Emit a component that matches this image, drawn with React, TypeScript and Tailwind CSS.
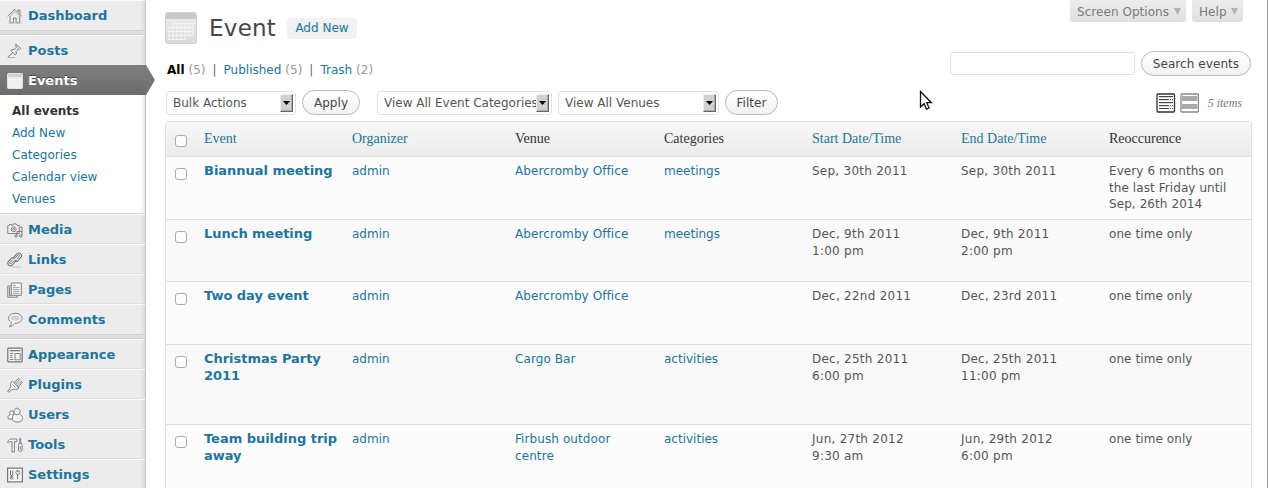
import React from "react";

type IconName =
  | "home" | "pin" | "calendar" | "media" | "link" | "pages"
  | "comment" | "appearance" | "plug" | "users" | "tools" | "settings";

const drawings: Record<IconName, React.ReactNode> = {
  home: (
    <>
      <path d="M.7 8.300 7.700 1.300l7 7M3 8v6.800h3.500V10h2.600v4.800h3.600V8M11 4.300V2h2v4.300" />
      <path d="M2.300 9 7.800 3.600 13.300 9" stroke="#aaa" />
      <path d="M1.500 15h13" stroke="#bbb" />
    </>
  ),
  pin: (
    <>
      <path d="M8.800 1 13.700 5.400l-1.200 1-1-.3-2.400 2.400.3 2.500-1.200.9-4.300-4.200 1-1.200 2.300.1 2.200-2.500-.6-1.600zM5.700 9.900.8 14" />
      <path d="M9.800 4.200l1.600 1.600" stroke="#999" />
      <path d="M.8 14.500h7.500" stroke="#aaa" />
    </>
  ),
  calendar: (
    <>
      <rect x="0.5" y="0.5" width="15" height="15" rx="1" fill="#ececec" stroke="#e4e4e4" />
      <path d="M1 2.500h14" stroke="#d2d2d2" strokeWidth="3" />
      <path d="M2 6.500h12v7.500H2zM2 9h12M2 11.500h12M5 6.500V14M8 6.500V14M11 6.500V14" stroke="#f8f8f8" strokeWidth="0.7" />
    </>
  ),
  media: (
    <>
      <path d="M.8 3.5h1.7v-1h2v1h1l1-1.600h2.800l1 1.600h1.900v8H.8z" fill="#f4f4f4" />
      <circle cx="6.7" cy="7.3" r="2.5" />
      <circle cx="6.7" cy="7.3" r="1" />
      <path d="M13 5h2v8.600M10 13.700V9.500h4.800" />
      <circle cx="9" cy="14" r="1.2" fill="#ddd" />
      <circle cx="13.8" cy="14" r="1.2" fill="#ddd" />
    </>
  ),
  link: (
    <>
      <path d="M6.400 5.900 9.800 1.800q1.800-1.500 3.500-.2 2.300 1.700.7 3.800l-3.300 3.500q-1.700 1.200-3.400-.2M9.300 8 5.900 12.500q-1.800 2.300-4.100.7-2-1.900-.1-4l2.500-2.700q1.800-1.300 3.400.2" strokeWidth="1.1" />
      <path d="m8 6 3-3.100q1.300-.4 1.800.9l-3 3.300M7 8.700l-3.100 3.200q-1.200.3-1.400-1.100l3-3" />
      <path d="M5 15h9" stroke="#bbb" />
    </>
  ),
  pages: (
    <>
      <path d="M4 4H.8v11.200h9.400v-1.600M2.500 5v8.700H4" />
      <path d="M4.300 1h10v12.300h-10z" fill="#f7f7f7" />
      <path d="M6 3.400h3M6 5.400h6.500M6 7.400h6.500M6 9.400h6.500M6 11.400h6.500" stroke="#999" />
    </>
  ),
  comment: (
    <>
      <path d="M8.400 1.300c-4 0-6.800 2.100-6.800 4.900 0 2.200 1.500 3.600 3 4.200-.2 1.800-1 3.100-2.500 4.300 3-.6 5-1.800 6-3.400 4.200-.1 6.900-2.100 6.900-5 0-2.800-2.700-5-6.600-5z" fill="#f4f4f4" />
      <ellipse cx="8.400" cy="6" rx="4.500" ry="2.700" fill="#d2d2d2" stroke="none" />
    </>
  ),
  appearance: (
    <>
      <rect x="0.8" y="1.2" width="14.4" height="13.6" rx="0.8" fill="#f4f4f4" strokeWidth="1.2" />
      <path d="M2.700 3.700h10.600" strokeWidth="1.2" />
      <path d="M2.800 6.400h3.600M2.800 8.400h2.900M2.800 10.400h2.900M2.800 12.500h3.600M8 6.500h5.200v6.300H8z" />
    </>
  ),
  plug: (
    <>
      <path d="M5.400 4.100 12 11c-1.400 1.300-3.200 1.800-5.300 1.200l-2 .6-3 2.500-1-1 2.300-3 .6-2C3 7 3.600 5.300 5.400 4.100z" fill="#f4f4f4" />
      <path d="m7.300 5.900 3.800-4.400q1.400-.3 1.300 1L8.700 7.300M10 8.800l3.800-4.200q1.400-.3 1.300 1l-3.900 4.600M5.500 7.500l3 3" />
    </>
  ),
  users: (
    <>
      <circle cx="4.8" cy="6" r="2.2" fill="#f4f4f4" />
      <path d="M3 7.700C.8 8.700.6 10.300 1.400 12h4.300l2-3.400" fill="#f4f4f4" />
      <path d="M7.500 7C6.400 5.100 6.800 1.500 10 1.200c3.200.3 3.600 3.900 2.300 5.800 2.900 1.200 4 3.900 3 6-2.300 2.700-7 2.600-9.600.3C5.100 10.900 5.500 8 7.500 7z" fill="#f4f4f4" />
      <path d="M7.500 7q2.400 1.600 4.800 0" />
    </>
  ),
  tools: (
    <>
      <path d="M.8 4.600C1.600 2.700 3.100 2 5.200 2h4.700v2.600H7.400V15H5V4.800C3.200 4.500 2 4.700.8 5.700zM12.800 1.300h.9v5h-.9zM12 6.500h2.500l.6 1.700v5.400q-1.800 2.200-3.600 0V8z" fill="#f4f4f4" />
      <path d="M13.300 9v4" />
    </>
  ),
  settings: (
    <>
      <rect x="0.6" y="1.100" width="14.800" height="13.800" fill="#f7f7f7" strokeWidth="1.2" />
      <path d="M3.500 3.400v5M5.700 3.400v5M4.600 8v3M10.500 7v5.200" strokeWidth="1.1" />
      <circle cx="4.600" cy="10.800" r="1.400" />
      <circle cx="10.800" cy="5.500" r="2" />
      <path d="M10.800 3v2.400" />
    </>
  ),
};

function Icon({ name }: { name: IconName }) {
  return (
    <svg width="16" height="16" viewBox="0 0 16 16" fill="none" stroke="#757575" strokeWidth="0.9" className="shrink-0">
      {drawings[name]}
    </svg>
  );
}

function MenuItem({ icon, label, last }: { icon: IconName; label: string; last?: boolean }) {
  return (
    <div className={"flex h-[30px] items-center gap-[5px] border-t border-t-[#f9f9f9] pl-[7px] text-[13px] font-bold text-[#21759b] " + (last ? "" : "border-b border-b-[#dfdfdf] pt-px")}>
      <Icon name={icon} />
      <span>{label}</span>
    </div>
  );
}

function Separator() {
  return <div className="h-[5px] border-y border-[#d2d2d2] bg-[#dfdfdf]" />;
}

function Sidebar() {
  return (
    <nav className="h-full w-[146px] shrink-0 border-r border-[#c4c4c4] bg-[#ececec] shadow-[inset_-4px_0_4px_-3px_#cfcfcf]">
      <MenuItem icon="home" label="Dashboard" last />
      <Separator />
      <MenuItem icon="pin" label="Posts" last />
      <div className="flex h-[30px] w-[155px] items-center gap-[5px] bg-linear-to-b from-[#808080] to-[#6b6b6b] pt-px pl-[7px] text-[13px] font-bold text-white [clip-path:polygon(0_0,146px_0,155px_50%,146px_100%,0_100%)] [text-shadow:0_-1px_0_#444]">
        <Icon name="calendar" />
        <span>Events</span>
      </div>
      <div className="flex h-[119px] flex-col border-b border-[#d5d5d5] bg-white pt-[5px] pl-3 leading-[22px] text-[#21759b] shadow-[inset_-4px_0_4px_-3px_#dcdcdc]">
        <span className="font-bold text-[#333]">All events</span>
        <span>Add New</span>
        <span>Categories</span>
        <span>Calendar view</span>
        <span>Venues</span>
      </div>
      <MenuItem icon="media" label="Media" />
      <MenuItem icon="link" label="Links" />
      <MenuItem icon="pages" label="Pages" />
      <MenuItem icon="comment" label="Comments" last />
      <Separator />
      <MenuItem icon="appearance" label="Appearance" />
      <MenuItem icon="plug" label="Plugins" />
      <MenuItem icon="users" label="Users" />
      <MenuItem icon="tools" label="Tools" />
      <MenuItem icon="settings" label="Settings" />
    </nav>
  );
}

function PillButton({ children, width }: { children: string; width: string }) {
  return (
    <button className={"h-[25px] shrink-0 rounded-full border border-[#bbb] bg-linear-to-b from-white to-[#f2f2f2] text-[12px] tracking-[0.07px] text-[#464646] " + width}>
      {children}
    </button>
  );
}

function SelectBox({ label, width }: { label: string; width: string }) {
  return (
    <div className={"flex h-6 shrink-0 items-center justify-between rounded-[3px] border border-[#dfdfdf] bg-white pr-[2px] pl-[6px] whitespace-nowrap text-[#555] " + width}>
      <span className="w-0">{label}</span>
      <span className="flex h-[18px] w-[13px] items-center justify-center border border-t-[#eee] border-r-[#666] border-b-[#666] border-l-[#eee] bg-[#d0d0d0] shadow-[inset_-1px_-1px_0_#aaa]">
        <svg width="7" height="4" viewBox="0 0 7 4"><path d="M0 0h7L3.5 4z" fill="#000" /></svg>
      </span>
    </div>
  );
}

function ScreenTab({ label, width }: { label: string; width: string }) {
  return (
    <div className={"flex h-[22px] items-center justify-between rounded-b-[3px] bg-linear-to-b from-[#ececec] to-[#e0e0e0] pt-px pr-[5px] pl-[7px] tracking-[0.05px] text-[#7a7a7a] " + width}>
      <span>{label}</span>
      <svg width="7" height="7" viewBox="0 0 7 7"><path d="M0 0h7L3.5 7z" fill="#b0b0b0" /></svg>
    </div>
  );
}

function BigCalendar() {
  return (
    <svg width="32" height="32" viewBox="0 0 32 32" className="shrink-0">
      <defs>
        <linearGradient id="cal" x1="0" y1="0" x2="0" y2="1">
          <stop offset="0" stopColor="#eeeeee" />
          <stop offset="1" stopColor="#dadada" />
        </linearGradient>
      </defs>
      <rect x="0.5" y="0.5" width="31" height="31" rx="2.500" fill="url(#cal)" stroke="#d2d2d2" />
      <path d="M1 3q0-2 2-2h26q2 0 2 2v4H1z" fill="#c8c8c8" />
      <path d="M8 11.500h20.500M3.500 15.500h25M3.500 19.500h25M3.500 23.500h25M3.500 27.500h17M4 15.500v12M8 11.500v16M12 11.500v16M16 11.500v16M20 11.500v16M24 11.500v12M28 11.500v12" stroke="#f5f5f5" fill="none" />
    </svg>
  );
}

function Checkbox() {
  return <span className="block size-3 rounded-[3px] border border-[#aaa] bg-white" />;
}

const columns = "grid grid-cols-[38px_148px_163px_149px_148px_149px_148px_1fr]";

const cellStyles = [
  "text-[13px] font-bold tracking-[-0.03px] text-[#21759b]",
  "text-[#21759b]",
  "tracking-[0.09px] text-[#21759b]",
  "text-[#21759b]",
  "tracking-[0.25px]",
  "tracking-[0.25px]",
  "tracking-[0.08px]",
];

const rows = [
  { height: "h-[63px]", bg: "bg-[#fcfcfc]", cells: ["Biannual meeting", "admin", "Abercromby Office", "meetings", "Sep, 30th 2011", "Sep, 30th 2011", "Every 6 months on\nthe last Friday until\nSep, 26th 2014"] },
  { height: "h-[62px]", bg: "bg-[#f9f9f9]", cells: ["Lunch meeting", "admin", "Abercromby Office", "meetings", "Dec, 9th 2011\n1:00 pm", "Dec, 9th 2011\n2:00 pm", "one time only"] },
  { height: "h-[63px]", bg: "bg-[#fcfcfc]", cells: ["Two day event", "admin", "Abercromby Office", "", "Dec, 22nd 2011", "Dec, 23rd 2011", "one time only"] },
  { height: "h-[80px]", bg: "bg-[#f9f9f9]", cells: ["Christmas Party\n2011", "admin", "Cargo Bar", "activities", "Dec, 25th 2011\n6:00 pm", "Dec, 25th 2011\n11:00 pm", "one time only"] },
  { height: "h-[80px]", bg: "bg-[#fcfcfc]", cells: ["Team building trip\naway", "admin", "Firbush outdoor\ncentre", "activities", "Jun, 27th 2012\n9:30 am", "Jun, 29th 2012\n6:00 pm", "one time only"] },
];

const headings = [
  { text: "Event", link: true },
  { text: "Organizer", link: true },
  { text: "Venue", link: false },
  { text: "Categories", link: false },
  { text: "Start Date/Time", link: true },
  { text: "End Date/Time", link: true },
  { text: "Reoccurence", link: false },
];

function EventTable() {
  return (
    <div className="w-[1087px] shrink-0 rounded-t-[3px] border border-[#dfdfdf]">
      <div className={columns + " h-[35px] border-b border-[#dfdfdf] bg-linear-to-b from-[#f8f8f8] to-[#ebebeb] font-['Liberation_Serif',serif] text-[14px] leading-[18px] text-[#333]"}>
        <div className="pt-[13px] pl-[9px]"><Checkbox /></div>
        {headings.map((h) => (
          <div key={h.text} className={"pt-[8px] " + (h.link ? "text-[#21759b]" : "")}>{h.text}</div>
        ))}
      </div>
      {rows.map((row) => (
        <div key={row.cells[0]} className={columns + " border-b border-[#dfdfdf] leading-[16.5px] text-[#555] " + row.height + " " + row.bg}>
          <div className="pt-[11px] pl-[9px]"><Checkbox /></div>
          {row.cells.map((text, i) => (
            <div key={i} className={"pt-[6px] whitespace-pre " + cellStyles[i]}>
              {text}
            </div>
          ))}
        </div>
      ))}
    </div>
  );
}

function ViewIcons() {
  return (
    <svg width="43" height="20" viewBox="0 0 43 20" className="shrink-0">
      <rect x="1" y="1" width="17.500" height="18" rx="1" fill="#fff" stroke="#333" strokeWidth="1.300" />
      <path d="M3 4.500h14M3 7.500h14M3 10.500h14M3 13.500h14" stroke="#ddd" />
      <path d="M3 3.500h14M3 6.500h9M3 9.500h14M3 12.500h9M3 15.500h9" stroke="#444" />
      <path d="M12 6.500h5M12 12.500h5M12 15.500h5" stroke="#555" strokeDasharray="1 1" />
      <rect x="25" y="1" width="17.500" height="18" rx="1" fill="#fff" stroke="#888" strokeWidth="1.300" />
      <path d="M26 3h15.500v5H26zM26 11h15.500v5H26z" fill="#aaa" />
    </svg>
  );
}

export default function App() {
  return (
    <div className="relative flex h-[488px] w-[1268px] overflow-hidden border-r border-[#999] bg-white font-['DejaVu_Sans',sans-serif] text-[12px] leading-4 text-[#333]">
      <Sidebar />
      <main className="flex min-w-0 flex-1 flex-col pl-[19px]">
        <div className="flex h-[50px] shrink-0 justify-between pr-[24px]">
          <div className="flex h-[55px] items-center">
            <BigCalendar />
            <h1 className="ml-3 w-[78px] text-[23px] leading-7 tracking-[0.25px] text-[#464646]">Event</h1>
            <span className="mt-px flex h-[21px] w-[70px] items-center justify-center rounded-[3px] bg-[#f1f1f1] text-[#21759b]">Add New</span>
          </div>
          <div className="flex gap-[6px]">
            <ScreenTab label="Screen Options" width="w-[116px]" />
            <ScreenTab label="Help" width="w-[51px]" />
          </div>
        </div>
        <div className="flex h-[27px] shrink-0 justify-between pr-[16px]">
          <div className="flex gap-[4px] pt-[12px] pl-[2px] text-[#999]">
            <b className="text-black">All</b><span>(5)</span>
            <span className="mx-[3px] text-[#666]">|</span>
            <span className="text-[#21759b]">Published</span><span>(5)</span>
            <span className="mx-[3px] text-[#666]">|</span>
            <span className="text-[#21759b]">Trash</span><span>(2)</span>
          </div>
          <div className="flex items-center gap-[6px]">
            <div className="h-[23px] w-[185px] rounded-[3px] border border-[#dfdfdf] bg-white" />
            <PillButton width="w-[110px]">Search events</PillButton>
          </div>
        </div>
        <div className="flex h-[44px] shrink-0 items-center pt-[7px] pl-px">
          <SelectBox label="Bulk Actions" width="w-[130px]" />
          <div className="w-[6px]" />
          <PillButton width="w-[58px]">Apply</PillButton>
          <div className="w-[17px]" />
          <SelectBox label="View All Event Categories" width="w-[175px]" />
          <div className="w-[6px]" />
          <SelectBox label="View All Venues" width="w-[161px]" />
          <div className="w-[6px]" />
          <PillButton width="w-[53px]">Filter</PillButton>
          <div className="ml-auto flex items-center gap-[9px] pr-[25px]">
            <ViewIcons />
            <span className="font-['Liberation_Serif',serif] text-[12px] text-[#777] italic">5 items</span>
          </div>
        </div>
        <EventTable />
      </main>
      <svg className="absolute top-[90px] left-[919px]" width="14" height="21" viewBox="0 0 14 21">
        <path d="M1.500 1.500v15.500l3.600-3.300 2.400 5.500 2.600-1.200-2.400-5.300h4.700z" fill="#fff" stroke="#111" strokeWidth="1.300" />
      </svg>
    </div>
  );
}
